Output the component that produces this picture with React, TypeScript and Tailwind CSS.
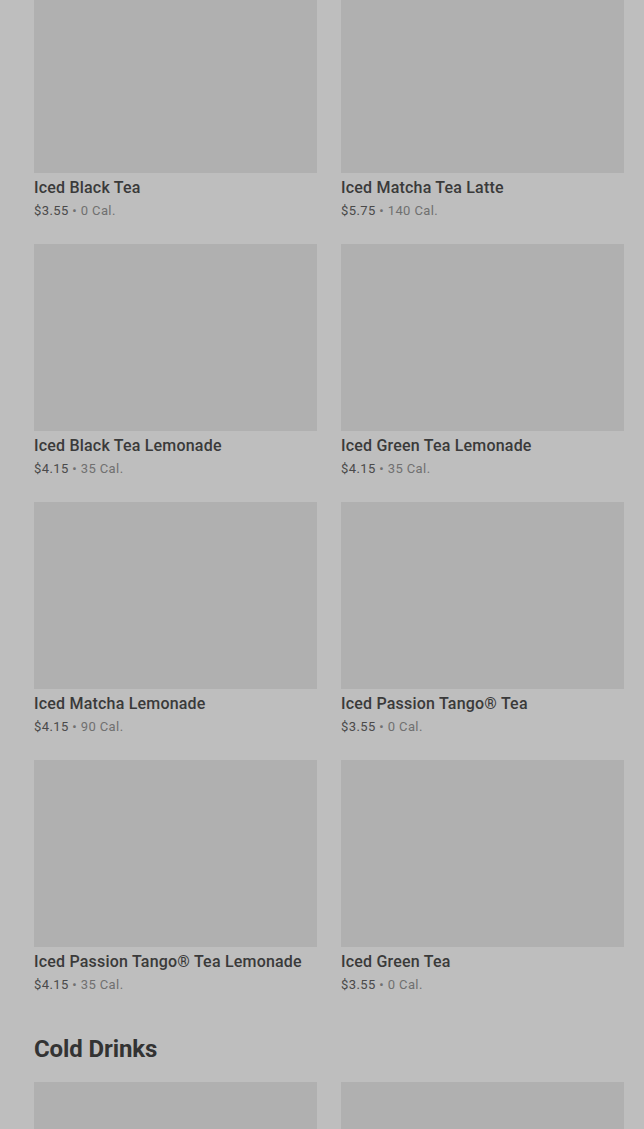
const drinks = [
  { name: "Iced Black Tea", price: "$3.55", cal: "0 Cal." },
  { name: "Iced Matcha Tea Latte", price: "$5.75", cal: "140 Cal." },
  { name: "Iced Black Tea Lemonade", price: "$4.15", cal: "35 Cal." },
  { name: "Iced Green Tea Lemonade", price: "$4.15", cal: "35 Cal." },
  { name: "Iced Matcha Lemonade", price: "$4.15", cal: "90 Cal." },
  { name: "Iced Passion Tango® Tea", price: "$3.55", cal: "0 Cal." },
  { name: "Iced Passion Tango® Tea Lemonade", price: "$4.15", cal: "35 Cal." },
  { name: "Iced Green Tea", price: "$3.55", cal: "0 Cal." },
];

function DrinkCard({ name, price, cal }: { name: string; price: string; cal: string }) {
  return (
    <div className="flex flex-col">
      <div className="h-[187px] w-full bg-[#b0b0b0]" />
      <div className="mt-[3px] text-[16px] leading-[24px] font-medium tracking-[0.2px] text-[#3a3a3a]">
        {name}
      </div>
      <div className="mt-[1px] text-[13px] leading-[19px] tracking-[0.4px] text-[#707070]">
        <span className="text-[#4a4a4a]">{price}</span>
        <span> • {cal}</span>
      </div>
    </div>
  );
}

export default function App() {
  return (
    <div
      className="min-h-[1129px] overflow-hidden bg-[#bebebe] pl-[34px] pr-[20px]"
      style={{ fontFamily: "Roboto, 'Noto Sans', sans-serif" }}
    >
      <div className="-mt-[14px] grid grid-cols-2 gap-x-[24px] gap-y-[24px]">
        {drinks.map((d) => (
          <DrinkCard key={d.name} {...d} />
        ))}
      </div>
      <h2 className="mt-[39px] text-[24px] leading-[32px] font-bold tracking-[-0.1px] text-[#333333]">
        Cold Drinks
      </h2>
      <div className="mt-[17px] grid grid-cols-2 gap-x-[24px]">
        <div className="h-[187px] bg-[#b0b0b0]" />
        <div className="h-[187px] bg-[#b0b0b0]" />
      </div>
    </div>
  );
}
